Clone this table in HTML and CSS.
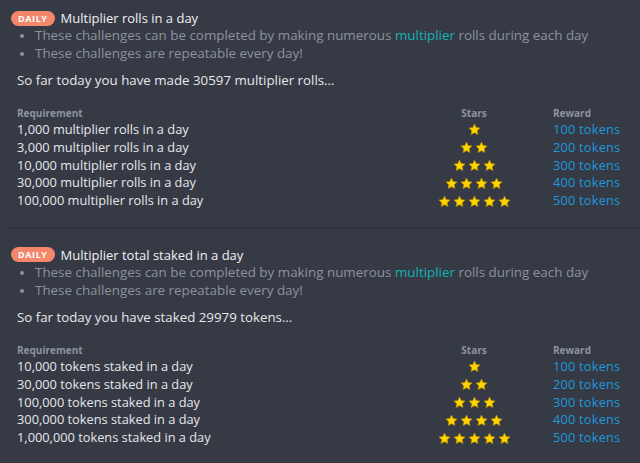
FILE: index.html
```html
<!DOCTYPE html>
<html lang="en">
  <head>
    <meta charset="UTF-8" />
    <meta name="viewport" content="width=device-width, initial-scale=1.0" />
    <title>Daily challenges</title>
    <link rel="stylesheet" href="styles.css">
  </head>
  <body>
    <svg width="0" height="0" class="defs">
      <symbol id="star" viewBox="0 0 24 24">
        <path d="M12 1.8l3.1 6.6 7.2.9-5.3 5 1.4 7.1L12 17.9l-6.4 3.5 1.4-7.1-5.3-5 7.2-.9z" fill="#ffd400" stroke="#b58a00" stroke-width="1.2" stroke-linejoin="round" />
      </symbol>
    </svg>

    <section class="challenge">
      <div class="challenge-title">
        <span class="badge">DAILY</span>
        <span>Multiplier rolls in a day</span>
      </div>
      <ul class="notes">
        <li>These challenges can be completed by making numerous <span class="hl">multiplier</span> rolls during each day</li>
        <li>These challenges are repeatable every day!</li>
      </ul>
      <p class="progress">So far today you have made 30597 multiplier rolls…</p>

      <div class="tiers">
        <div class="th">Requirement</div>
        <div class="th center">Stars</div>
        <div class="th reward-th">Reward</div>

        <div>1,000 multiplier rolls in a day</div>
        <div class="stars"><svg><use href="#star" /></svg></div>
        <div class="reward">100 tokens</div>

        <div>3,000 multiplier rolls in a day</div>
        <div class="stars"><svg><use href="#star" /></svg><svg><use href="#star" /></svg></div>
        <div class="reward">200 tokens</div>

        <div>10,000 multiplier rolls in a day</div>
        <div class="stars"><svg><use href="#star" /></svg><svg><use href="#star" /></svg><svg><use href="#star" /></svg></div>
        <div class="reward">300 tokens</div>

        <div>30,000 multiplier rolls in a day</div>
        <div class="stars"><svg><use href="#star" /></svg><svg><use href="#star" /></svg><svg><use href="#star" /></svg><svg><use href="#star" /></svg></div>
        <div class="reward">400 tokens</div>

        <div>100,000 multiplier rolls in a day</div>
        <div class="stars"><svg><use href="#star" /></svg><svg><use href="#star" /></svg><svg><use href="#star" /></svg><svg><use href="#star" /></svg><svg><use href="#star" /></svg></div>
        <div class="reward">500 tokens</div>
      </div>
    </section>

    <section class="challenge">
      <div class="challenge-title">
        <span class="badge">DAILY</span>
        <span>Multiplier total staked in a day</span>
      </div>
      <ul class="notes">
        <li>These challenges can be completed by making numerous <span class="hl">multiplier</span> rolls during each day</li>
        <li>These challenges are repeatable every day!</li>
      </ul>
      <p class="progress">So far today you have staked 29979 tokens…</p>

      <div class="tiers">
        <div class="th">Requirement</div>
        <div class="th center">Stars</div>
        <div class="th reward-th">Reward</div>

        <div>10,000 tokens staked in a day</div>
        <div class="stars"><svg><use href="#star" /></svg></div>
        <div class="reward">100 tokens</div>

        <div>30,000 tokens staked in a day</div>
        <div class="stars"><svg><use href="#star" /></svg><svg><use href="#star" /></svg></div>
        <div class="reward">200 tokens</div>

        <div>100,000 tokens staked in a day</div>
        <div class="stars"><svg><use href="#star" /></svg><svg><use href="#star" /></svg><svg><use href="#star" /></svg></div>
        <div class="reward">300 tokens</div>

        <div>300,000 tokens staked in a day</div>
        <div class="stars"><svg><use href="#star" /></svg><svg><use href="#star" /></svg><svg><use href="#star" /></svg><svg><use href="#star" /></svg></div>
        <div class="reward">400 tokens</div>

        <div>1,000,000 tokens staked in a day</div>
        <div class="stars"><svg><use href="#star" /></svg><svg><use href="#star" /></svg><svg><use href="#star" /></svg><svg><use href="#star" /></svg><svg><use href="#star" /></svg></div>
        <div class="reward">500 tokens</div>
      </div>
    </section>
  </body>
</html>
```

FILE: styles.css
```css
body {
  margin: 0;
  padding: 0 0 0 10px;
  background-color: #363a45;
  font-family: "Open Sans", sans-serif;
  font-size: 13px;
  color: #e6e7ea;
  overflow: hidden;
}

.defs {
  position: absolute;
}

.challenge {
  padding: 10px 0 17px 1px;
  border-bottom: 2px solid #2f333d;
}

.challenge + .challenge {
  padding-top: 18px;
  border-bottom: none;
}

.challenge-title {
  display: flex;
  align-items: center;
  gap: 6px;
  height: 16px;
  font-size: 13px;
  color: #f0f1f3;
}

.badge {
  display: inline-block;
  background-color: #f3866b;
  color: #fff;
  font-size: 9px;
  font-weight: 700;
  letter-spacing: 0.6px;
  line-height: 15px;
  padding: 0 7px;
  border-radius: 8px;
}

.notes {
  margin: 0;
  padding-left: 24px;
  color: #8c929e;
  font-size: 13.4px;
  line-height: 18px;
}

.notes li::marker {
  font-size: 11px;
}

.hl {
  color: #14b4b4;
}

.progress {
  margin: 9px 0 0 6px;
  font-size: 13.3px;
  line-height: 18px;
}

.tiers {
  display: grid;
  grid-template-columns: 403px 108px auto;
  margin: 17px 0 0 6px;
  font-size: 12.8px;
  line-height: 17.8px;
}

.tiers .reward {
  padding-left: 25px;
  color: #1e98dc;
  letter-spacing: 0.2px;
}

.th {
  font-size: 10px;
  font-weight: 700;
  color: #8d939f;
  line-height: 15px;
}

.th.reward-th {
  padding-left: 25px;
}

.center {
  text-align: center;
}

.stars {
  display: flex;
  justify-content: center;
  align-items: center;
  gap: 2px;
}

.stars svg {
  width: 13px;
  height: 13px;
}
```
